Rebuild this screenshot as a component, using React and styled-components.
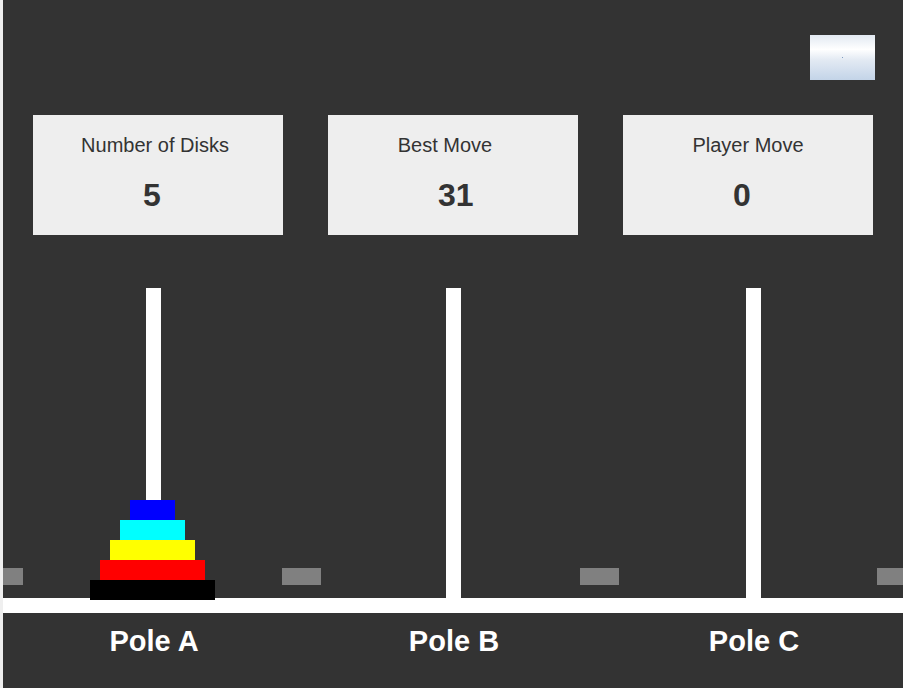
import styled, { createGlobalStyle } from "styled-components";

const GlobalStyle = createGlobalStyle`
  html, body {
    margin: 0;
    padding: 0;
    background: #efefef;
    overflow: hidden;
  }
  body {
    font-family: "Liberation Sans", Arial, sans-serif;
  }
`

const stats = [
  { title: "Number of Disks", value: 5, offset: 6 },
  { title: "Best Move", value: 31, offset: 16 },
  { title: "Player Move", value: 0, offset: 0 },
]

const disks = [
  { width: 45, color: "#0000ff" },
  { width: 65, color: "#00ffff" },
  { width: 85, color: "#ffff00" },
  { width: 105, color: "#ff0000" },
  { width: 125, color: "#000000" },
]

const poles = ["A", "B", "C"]
const markers = [-19, 279, 577, 874]

const App = () => {
  return (
    <>
      <GlobalStyle />
      <Page>
        <TopBar>
          <ResetButton aria-label="reset">
            <Dot />
          </ResetButton>
        </TopBar>
        <Scoreboard>
          {stats.map(s => (
            <Card key={s.title}>
              <CardTitle $offset={s.offset}>{s.title}</CardTitle>
              <CardValue>{s.value}</CardValue>
            </Card>
          ))}
        </Scoreboard>
        <Board>
          {poles.map((p, i) => (
            <Column key={p}>
              <Pole />
              {i === 0 && (
                <Stack>
                  {disks.map(d => (
                    <Disk key={d.color} $width={d.width} $color={d.color} />
                  ))}
                </Stack>
              )}
            </Column>
          ))}
          {markers.map(x => (
            <Marker key={x} $left={x} />
          ))}
        </Board>
        <Base />
        <Labels>
          {poles.map(p => (
            <Label key={p}>Pole {p}</Label>
          ))}
        </Labels>
      </Page>
    </>
  )
}

export default App;

const Page = styled.div`
  margin-left: 3px;
  width: 900px;
  height: 688px;
  background: #333333;
  overflow: hidden;
`
const TopBar = styled.div`
  display: flex;
  justify-content: flex-end;
  padding: 35px 28px 0 0;
`
const ResetButton = styled.button`
  display: flex;
  align-items: center;
  justify-content: center;
  width: 65px;
  height: 45px;
  padding: 0;
  border: none;
  background: linear-gradient(
    to bottom,
    #e2e9f2 0%,
    #ffffff 32%,
    #e3eaf3 55%,
    #c3d4e8 100%
  );
  cursor: pointer;
`
const Dot = styled.span`
  width: 1px;
  height: 1px;
  background: #7f9cc0;
`
const Scoreboard = styled.div`
  display: flex;
  gap: 45px;
  padding: 35px 30px 0;
`
const Card = styled.div`
  width: 250px;
  height: 120px;
  box-sizing: border-box;
  padding-top: 18px;
  background: #eeeeee;
  color: #333333;
  display: flex;
  flex-direction: column;
  align-items: center;
`
const CardTitle = styled.div`
  font-size: 20px;
  line-height: 24px;
  padding-right: ${props => props.$offset}px;
`
const CardValue = styled.div`
  margin-top: 20px;
  width: 30px;
  font-size: 32px;
  line-height: 36px;
  font-weight: bold;
  text-align: left;
  white-space: nowrap;
`
const Board = styled.div`
  position: relative;
  margin-top: 53px;
  height: 310px;
  display: grid;
  grid-template-columns: repeat(3, 300px);
`
const Column = styled.div`
  display: grid;
  grid-template-areas: "cell";
  justify-items: center;
`
const Pole = styled.div`
  grid-area: cell;
  width: 15px;
  height: 100%;
  background: #ffffff;
`
const Stack = styled.div`
  grid-area: cell;
  align-self: end;
  position: relative;
  z-index: 1;
  margin: 0 2px -2px 0;
  display: flex;
  flex-direction: column;
  align-items: center;
`
const Disk = styled.div`
  width: ${props => props.$width}px;
  height: 20px;
  background: ${props => props.$color};
`
const Marker = styled.div`
  position: absolute;
  top: 280px;
  left: ${props => props.$left}px;
  width: 39px;
  height: 17px;
  background: #808080;
`
const Base = styled.div`
  height: 15px;
  background: #ffffff;
`
const Labels = styled.div`
  display: grid;
  grid-template-columns: repeat(3, 300px);
  padding-top: 11px;
`
const Label = styled.div`
  text-align: center;
  padding-left: 2px;
  color: #ffffff;
  font-size: 29px;
  line-height: 34px;
  font-weight: bold;
`
